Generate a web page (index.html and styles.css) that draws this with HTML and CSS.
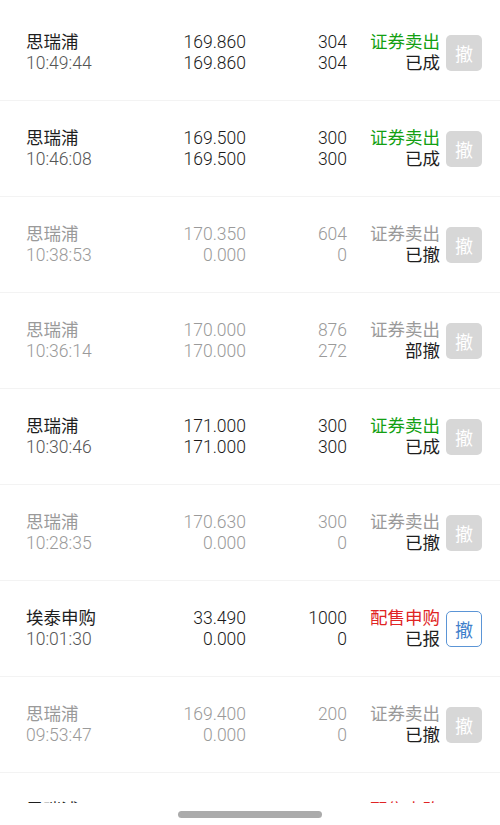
FILE: index.html
```html
<!DOCTYPE html>
<html lang="zh-CN">
<head>
<meta charset="utf-8">
<title>委托列表</title>
<link rel="stylesheet" href="styles.css">
</head>
<body>
<div class="list">
  <div class="row">
    <div class="c name"><div class="cn">思瑞浦</div><div class="time">10:49:44</div></div>
    <div class="c num"><div>169.860</div><div>169.860</div></div>
    <div class="c num"><div>304</div><div>304</div></div>
    <div class="c st"><div class="green">证券卖出</div><div>已成</div></div>
    <div class="btn off">撤</div>
  </div>
  <div class="row">
    <div class="c name"><div class="cn">思瑞浦</div><div class="time">10:46:08</div></div>
    <div class="c num"><div>169.500</div><div>169.500</div></div>
    <div class="c num"><div>300</div><div>300</div></div>
    <div class="c st"><div class="green">证券卖出</div><div>已成</div></div>
    <div class="btn off">撤</div>
  </div>
  <div class="row dim">
    <div class="c name"><div class="cn">思瑞浦</div><div class="time">10:38:53</div></div>
    <div class="c num"><div>170.350</div><div>0.000</div></div>
    <div class="c num"><div>604</div><div>0</div></div>
    <div class="c st"><div>证券卖出</div><div class="dark">已撤</div></div>
    <div class="btn off">撤</div>
  </div>
  <div class="row dim">
    <div class="c name"><div class="cn">思瑞浦</div><div class="time">10:36:14</div></div>
    <div class="c num"><div>170.000</div><div>170.000</div></div>
    <div class="c num"><div>876</div><div>272</div></div>
    <div class="c st"><div>证券卖出</div><div class="dark">部撤</div></div>
    <div class="btn off">撤</div>
  </div>
  <div class="row">
    <div class="c name"><div class="cn">思瑞浦</div><div class="time">10:30:46</div></div>
    <div class="c num"><div>171.000</div><div>171.000</div></div>
    <div class="c num"><div>300</div><div>300</div></div>
    <div class="c st"><div class="green">证券卖出</div><div>已成</div></div>
    <div class="btn off">撤</div>
  </div>
  <div class="row dim">
    <div class="c name"><div class="cn">思瑞浦</div><div class="time">10:28:35</div></div>
    <div class="c num"><div>170.630</div><div>0.000</div></div>
    <div class="c num"><div>300</div><div>0</div></div>
    <div class="c st"><div>证券卖出</div><div class="dark">已撤</div></div>
    <div class="btn off">撤</div>
  </div>
  <div class="row">
    <div class="c name"><div class="cn">埃泰申购</div><div class="time">10:01:30</div></div>
    <div class="c num"><div>33.490</div><div>0.000</div></div>
    <div class="c num"><div>1000</div><div>0</div></div>
    <div class="c st"><div class="red">配售申购</div><div>已报</div></div>
    <div class="btn on">撤</div>
  </div>
  <div class="row dim">
    <div class="c name"><div class="cn">思瑞浦</div><div class="time">09:53:47</div></div>
    <div class="c num"><div>169.400</div><div>0.000</div></div>
    <div class="c num"><div>200</div><div>0</div></div>
    <div class="c st"><div>证券卖出</div><div class="dark">已撤</div></div>
    <div class="btn off">撤</div>
  </div>
  <div class="row">
    <div class="c name"><div class="cn">思瑞浦</div><div class="time">09:45:12</div></div>
    <div class="c num"><div>169.000</div><div>0.000</div></div>
    <div class="c num"><div>100</div><div>0</div></div>
    <div class="c st"><div class="red">配售申购</div><div>已报</div></div>
    <div class="btn on">撤</div>
  </div>
</div>
<div class="homebar"><div class="indicator"></div></div>
</body>
</html>
```
FILE: styles.css
```css
html, body {
  margin: 0;
  padding: 0;
  background: #fff;
  overflow: hidden;
}
body {
  font-family: Roboto, "Noto Sans CJK SC", sans-serif;
  font-weight: 300;
  font-size: 17.5px;
  color: #1e1e1e;
  width: 500px;
  height: 825px;
}
.list {
  padding-top: 5px;
  height: 798px;
  overflow: hidden;
}
.row {
  box-sizing: border-box;
  height: 96px;
  border-bottom: 1px solid #f3f3f3;
  display: grid;
  grid-template-columns: 120px 100px 101px 93px 36px;
  column-gap: 0;
  padding-left: 26px;
  align-items: center;
}
.c {
  line-height: 21px;
  white-space: nowrap;
}
.name {
  text-align: left;
}
.cn, .st {
  font-weight: 400;
}
.time {
  color: #555;
}
.num, .st {
  text-align: right;
}
.num {
  color: #1a1a1a;
}
.green { color: #13a013; }
.red { color: #e02424; }
.dim .c, .dim .c .time { color: #9a9a9a; }
.dim .c .dark { color: #1e1e1e; }
.btn {
  box-sizing: border-box;
  width: 36px;
  height: 36px;
  margin-left: 6px;
  border-radius: 5px;
  display: flex;
  align-items: center;
  justify-content: center;
  font-size: 18px;
  font-family: "Noto Sans CJK SC", sans-serif;
  font-weight: 400;
}
.btn.off {
  background: #d7d7d7;
  color: #fff;
}
.btn.on {
  border: 1px solid #5b95d6;
  color: #3f7fcb;
  background: #fff;
}
.homebar {
  position: fixed;
  left: 0;
  right: 0;
  bottom: 0;
  height: 22px;
  background: #fff;
  display: flex;
  justify-content: center;
  padding-top: 8px;
  box-sizing: border-box;
}
.indicator {
  width: 144px;
  height: 7px;
  border-radius: 4px;
  background: #ababab;
}
```
